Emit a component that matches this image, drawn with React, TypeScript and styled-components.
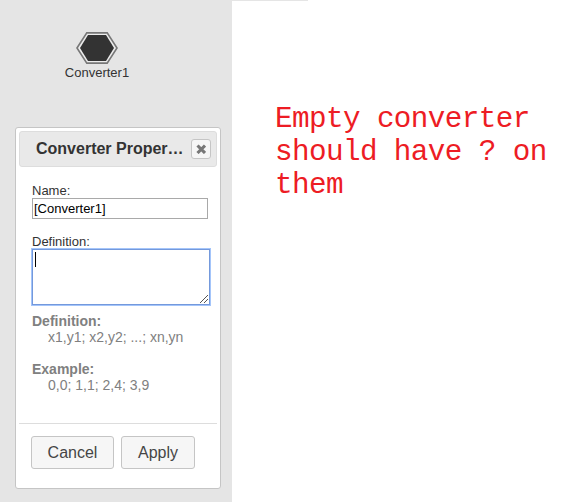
import React from "react";
import styled, { createGlobalStyle } from "styled-components";

const GlobalStyle = createGlobalStyle`
  * { box-sizing: border-box; }
  body {
    margin: 0;
    overflow: hidden;
    background: #fff;
    font-family: "Liberation Sans", Arial, sans-serif;
    color: #333;
  }
`;

const Page = styled.main`
  display: flex;
  width: 570px;
  height: 502px;
`;

const Canvas = styled.section`
  display: flex;
  flex-direction: column;
  width: 232px;
  height: 502px;
  padding: 32px 11px 13px 15px;
  background: #e5e5e5;
`;

const Converter = styled.figure`
  display: flex;
  flex-direction: column;
  align-items: center;
  width: 64px;
  height: 95px;
  margin: 0 0 0 50px;
`;

const ConverterLabel = styled.figcaption`
  margin-top: 1px;
  font-size: 13px;
  line-height: 15px;
  white-space: nowrap;
`;

const Dialog = styled.section`
  display: flex;
  flex-direction: column;
  width: 206px;
  height: 362px;
  padding: 3px;
  border: 1px solid #c5c5c5;
  border-radius: 3px;
  background: #fff;
`;

const TitleBar = styled.header`
  display: flex;
  align-items: center;
  justify-content: space-between;
  height: 36px;
  padding: 0 5px 0 16px;
  border: 1px solid #ddd;
  border-radius: 3px;
  background: #e9e9e9;
`;

const Title = styled.h1`
  margin: 0;
  white-space: nowrap;
  font-size: 16px;
  line-height: 20px;
`;

const CloseButton = styled.button`
  display: flex;
  align-items: center;
  justify-content: center;
  width: 20px;
  height: 20px;
  padding: 0;
  border: 1px solid #c5c5c5;
  border-radius: 3px;
  background: #f6f6f6;
`;

const Form = styled.div`
  display: flex;
  flex-direction: column;
  align-items: flex-start;
  height: 256px;
  padding: 16px 6px 0 13px;
`;

const Label = styled.label`
  font-size: 13px;
  line-height: 15px;
`;

const NameInput = styled.input`
  width: 176px;
  height: 21px;
  margin-bottom: 15px;
  padding: 0 1px;
  border: 1px solid #a9a9a9;
  border-radius: 0;
  outline: none;
  background: #fff;
  color: #000;
  font: 13px "Liberation Sans", Arial, sans-serif;
`;

const Editor = styled.div`
  display: flex;
  justify-content: space-between;
  width: 178px;
  height: 56px;
  padding: 2px 1px 1px 2px;
  border: 1px solid #7499dc;
  box-shadow: 0 0 0 1px #a4c5fa;
  background: #fff;
`;

const Caret = styled.span`
  width: 1px;
  height: 15px;
  background: #000;
`;

const Grip = styled.svg`
  align-self: flex-end;
`;

const Help = styled.dl`
  margin: 8px 0 0;
  color: #808080;
  font-size: 14px;
  line-height: 16px;
`;

const Term = styled.dt`
  font-weight: bold;
`;

const Detail = styled.dd`
  margin: 0 0 16px 16px;
`;

const Actions = styled.footer`
  display: flex;
  gap: 7px;
  padding: 12px 12px 0;
  border-top: 1px solid #ddd;
`;

const ActionButton = styled.button<{ $width: number }>`
  width: ${({ $width }) => $width}px;
  height: 33px;
  padding: 0;
  border: 1px solid #c5c5c5;
  border-radius: 3px;
  background: #f6f6f6;
  color: #454545;
  font: 16px "Liberation Sans", Arial, sans-serif;
`;

const NoteArea = styled.aside`
  flex: 1;
`;

const TopEdge = styled.div`
  width: 76px;
  height: 1px;
  background: #e5e5e5;
`;

const Note = styled.p`
  width: 290px;
  margin: 102px 0 0 43px;
  color: #ed1c24;
  font: 29.3px/33px "Liberation Mono", "Courier New", monospace;
  letter-spacing: -0.6px;
`;

export default function App() {
  return (
    <Page>
      <GlobalStyle />
      <Canvas>
        <Converter>
          <svg width="42" height="32" viewBox="0 0 42 32">
            <path d="M1 16 10.8.9h20.4L41 16l-9.8 15.1H10.8Z" fill="#ececec" stroke="#777" strokeWidth="1.6" />
            <path d="M4 16 12 3h18l8 13-8 13H12Z" fill="#333" />
          </svg>
          <ConverterLabel>Converter1</ConverterLabel>
        </Converter>
        <Dialog role="dialog" aria-label="Converter Properties">
          <TitleBar>
            <Title>Converter Proper…</Title>
            <CloseButton aria-label="Close">
              <svg width="10" height="10" viewBox="0 0 10 10">
                <path d="m1.5 1.5 7.5 7.5m0-7.5L1.5 9" stroke="#777" strokeWidth="3.1" />
              </svg>
            </CloseButton>
          </TitleBar>
          <Form>
            <Label htmlFor="name">Name:</Label>
            <NameInput id="name" defaultValue="[Converter1]" />
            <Label>Definition:</Label>
            <Editor role="textbox" aria-label="Definition">
              <Caret />
              <Grip width="8" height="8" viewBox="0 0 8 8" shapeRendering="crispEdges">
                <path
                  d="M0 7h1v1H0zM1 6h1v1H1zM2 5h1v1H2zM3 4h1v1H3zM4 3h1v1H4zM5 2h1v1H5zM6 1h1v1H6zM7 0h1v1H7zM4 7h1v1H4zM5 6h1v1H5zM6 5h1v1H6zM7 4h1v1H7z"
                  fill="#555"
                />
              </Grip>
            </Editor>
            <Help>
              <Term>Definition:</Term>
              <Detail>x1,y1; x2,y2; ...; xn,yn</Detail>
              <Term>Example:</Term>
              <Detail>0,0; 1,1; 2,4; 3,9</Detail>
            </Help>
          </Form>
          <Actions>
            <ActionButton $width={83}>Cancel</ActionButton>
            <ActionButton $width={74}>Apply</ActionButton>
          </Actions>
        </Dialog>
      </Canvas>
      <NoteArea>
        <TopEdge />
        <Note>Empty converter should have ? on them</Note>
      </NoteArea>
    </Page>
  );
}
